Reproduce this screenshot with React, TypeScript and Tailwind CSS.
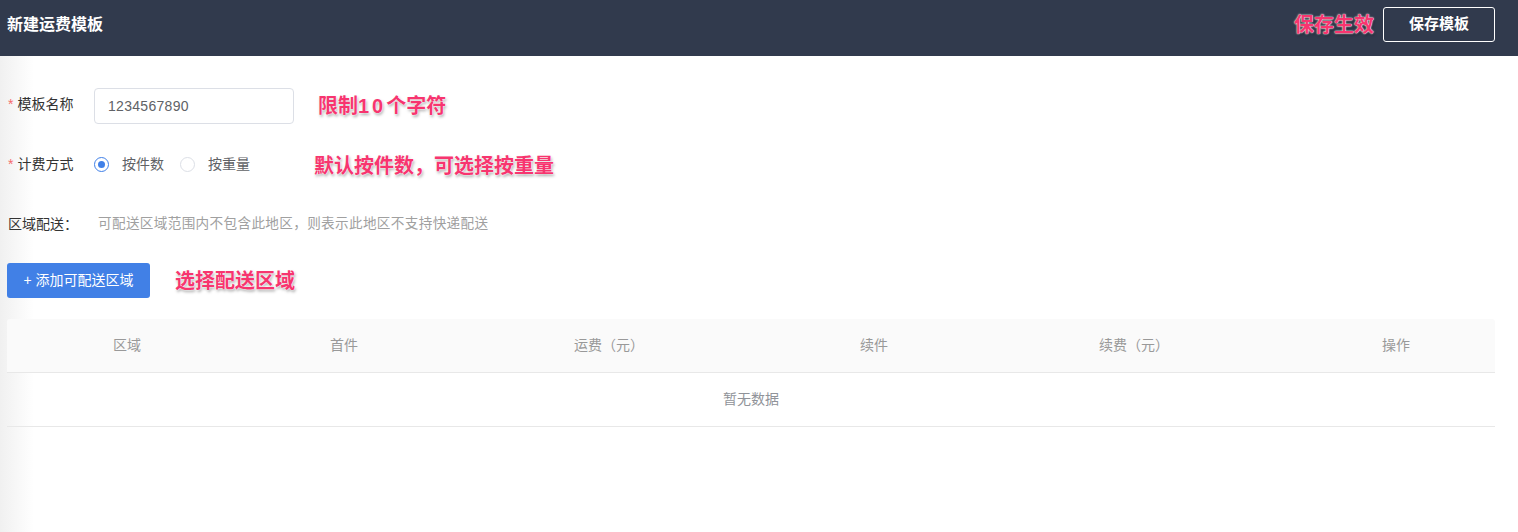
import { useState } from "react";

const note =
  "font-bold text-[20px] text-[#f7356f] [text-shadow:0_0_1px_#fff,0_0_2px_#fff,1px_2px_3px_rgba(0,0,0,0.35)]";

const columns = [
  { label: "区域", width: "w-[240px]" },
  { label: "首件", width: "w-[194px]" },
  { label: "运费（元）", width: "w-[336px]" },
  { label: "续件", width: "w-[194px]" },
  { label: "续费（元）", width: "w-[326px]" },
  { label: "操作", width: "flex-1" },
];

function Radio({ checked, label, onClick }: { checked: boolean; label: string; onClick: () => void }) {
  return (
    <button type="button" onClick={onClick} className="flex items-center gap-[13px] text-[14px] text-[#606266]">
      <span
        className={
          checked
            ? "flex h-[15px] w-[15px] items-center justify-center rounded-full border border-[#4080e8] bg-white"
            : "h-[15px] w-[15px] rounded-full border border-[#dcdfe6] bg-white"
        }
      >
        {checked ? <span className="h-[7px] w-[7px] rounded-full bg-[#4080e8]" /> : null}
      </span>
      {label}
    </button>
  );
}

export default function App() {
  const [byPiece, setByPiece] = useState(true);
  const [name, setName] = useState("1234567890");

  return (
    <div className="min-h-[532px] bg-white font-['Liberation_Sans','Noto_Sans_CJK_SC',sans-serif]">
      <header className="flex h-[56px] items-start justify-between bg-[#313a4d] pl-[7px] pr-[23px] pt-[7px] shadow-[0_1px_3px_rgba(0,0,0,0.08)]">
        <h1 className="flex h-[35px] items-center text-[16px] font-bold text-white">新建运费模板</h1>
        <div className="flex items-center gap-[9px]">
          <span className={note}>保存生效</span>
          <button
            type="button"
            className="flex h-[35px] w-[112px] items-center justify-center rounded-[3px] border border-white text-[15px] font-bold text-white"
          >
            保存模板
          </button>
        </div>
      </header>

      <main className="bg-[linear-gradient(to_right,#f0f0f0,#ffffff_34px)] pl-[7px] pr-[23px] pt-[32px] pb-[106px]">
        <div className="flex items-start">
          <label className="flex w-[87px] pl-[1px] pt-[6px] text-[14px] text-[#333]">
            <span className="mr-[4px] text-[#f56c6c]">*</span>模板名称
          </label>
          <input
            value={name}
            maxLength={10}
            onChange={(e) => setName(e.target.value)}
            className="h-[36px] w-[200px] rounded-[4px] border border-[#dcdfe6] px-[13px] text-[14px] tracking-[0.3px] text-[#606266] outline-none"
          />
          <span className={`${note} ml-[24px] mt-[3px]`}>
            限制<span className="tracking-[3px]">10</span>个字符
          </span>
        </div>

        <div className="mt-[23px] flex items-center">
          <label className="flex w-[87px] pl-[1px] text-[14px] text-[#333]">
            <span className="mr-[4px] text-[#f56c6c]">*</span>计费方式
          </label>
          <div className="flex items-center gap-[16px]">
            <Radio checked={byPiece} label="按件数" onClick={() => setByPiece(true)} />
            <Radio checked={!byPiece} label="按重量" onClick={() => setByPiece(false)} />
          </div>
          <span className={`${note} ml-[64px] mt-[4px]`}>默认按件数，可选择按重量</span>
        </div>

        <div className="mt-[33px] flex items-center text-[14px]">
          <span className="w-[91px] pl-[1px] text-[#333]">区域配送：</span>
          <span className="text-[13.6px] tracking-[0.35px] text-[#a0a0a0]">
            可配送区域范围内不包含此地区，则表示此地区不支持快递配送
          </span>
        </div>

        <div className="mt-[28px] flex items-center">
          <button
            type="button"
            className="flex h-[35px] w-[143px] items-center justify-center rounded-[3px] bg-[#4180e6] text-[14px] text-white"
          >
            + 添加可配送区域
          </button>
          <span className={`${note} ml-[25px]`}>选择配送区域</span>
        </div>

        <div className="mt-[21px] text-[14px]">
          <div className="flex h-[54px] items-center rounded-t-[3px] border-b border-[#e8e8e8] bg-[#fafafa] text-[#999]">
            {columns.map((c) => (
              <div key={c.label} className={`${c.width} text-center`}>
                {c.label}
              </div>
            ))}
          </div>
          <div className="flex h-[54px] items-center justify-center border-b border-[#e8e8e8] text-[#909399]">
            暂无数据
          </div>
        </div>
      </main>
    </div>
  );
}
